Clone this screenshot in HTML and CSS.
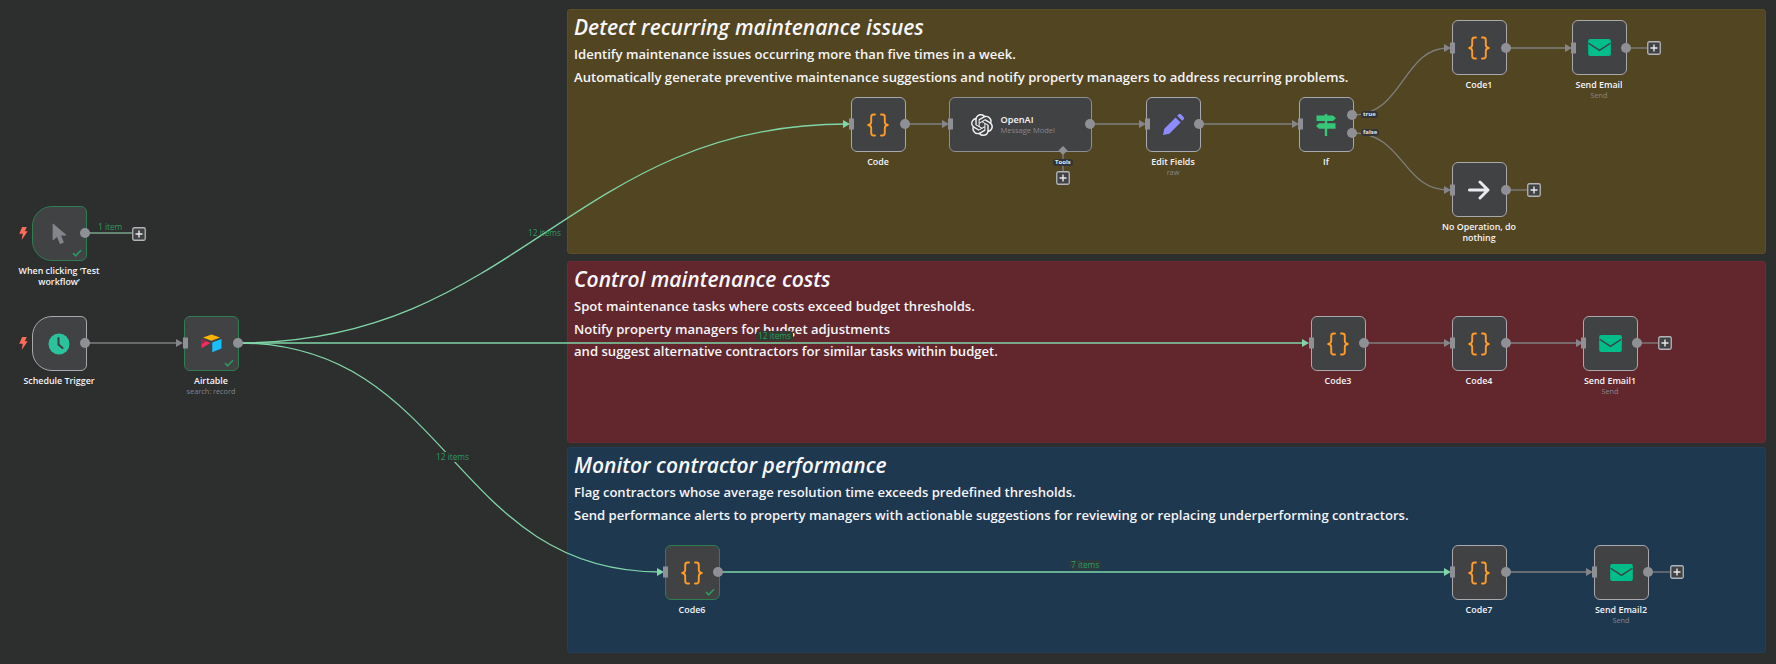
FILE: index.html
```html
<!DOCTYPE html>
<html lang="en">
<head>
<meta charset="utf-8">
<title>Workflow</title>
<link rel="stylesheet" href="styles.css">
</head>
<body>
<svg class="defs" width="0" height="0" aria-hidden="true">
  <defs>
    <symbol id="i-code" viewBox="0 0 24 24">
      <path d="M9 1.500H7.600C5.900 1.500 5.200 2.400 5.200 4v5c0 1.500-.8 2.600-3 3 2.200.4 3 1.500 3 3v5c0 1.600.7 2.500 2.400 2.500H9M15 1.500h1.400c1.700 0 2.400.9 2.400 2.500v5c0 1.500.8 2.600 3 3-2.200.4-3 1.500-3 3v5c0 1.600-.7 2.500-2.400 2.500H15" fill="none" stroke="#ff9b26" stroke-width="1.900" stroke-linecap="round" stroke-linejoin="round"/>
    </symbol>
    <symbol id="i-mail" viewBox="0 0 24 18">
      <rect width="24" height="18" rx="2" fill="#00bd8a"/>
      <path d="M0.500 4.500 12 12 23.500 4.500" fill="none" stroke="#3a4046" stroke-width="1.500"/>
    </symbol>
    <symbol id="i-plus" viewBox="0 0 14 14">
      <rect x=".75" y=".75" width="12.500" height="12.500" rx="1.500" fill="#414244" stroke="#b4b4ba" stroke-width="1.300"/>
      <path d="M7 3.500v7M3.500 7h7" stroke="#e8e8ee" stroke-width="1.400"/>
    </symbol>
    <symbol id="i-bolt" viewBox="0 0 9 14">
      <path d="M3 0h5L6 4.700h3L2.500 14l1.200-6.600H0z" fill="#ff6d5a"/>
    </symbol>
    <symbol id="i-check" viewBox="0 0 12 10">
      <path d="M1 5.200 4.300 8.500 11 1.500" fill="none" stroke="#2f9a63" stroke-width="2"/>
    </symbol>
  </defs>
</svg>

<main class="canvas">
  <section class="note note-yellow">
    <h2>Detect recurring maintenance issues</h2>
    <p>Identify maintenance issues occurring more than five times in a week.</p>
    <p>Automatically generate preventive maintenance suggestions and notify property managers to address recurring problems.</p>
  </section>
  <section class="note note-red">
    <h2>Control maintenance costs</h2>
    <p>Spot maintenance tasks where costs exceed budget thresholds.</p>
    <p>Notify property managers for budget adjustments</p>
    <p>and suggest alternative contractors for similar tasks within budget.</p>
  </section>
  <section class="note note-blue">
    <h2>Monitor contractor performance</h2>
    <p>Flag contractors whose average resolution time exceeds predefined thresholds.</p>
    <p>Send performance alerts to property managers with actionable suggestions for reviewing or replacing underperforming contractors.</p>
  </section>

  <div class="node pos-manual">
    <div class="box trigger ok">
      <svg class="icon-cursor" viewBox="0 0 16 24"><path d="M1 1v17.500l4.500-4 3.300 8 3.400-1.500-3.300-7.800H15z" fill="#85858c" stroke="#85858c" stroke-width="1" stroke-linejoin="round"/></svg>
      <svg class="check"><use href="#i-check"/></svg>
    </div>
    <span class="label">When clicking ‘Test workflow’</span>
    <svg class="bolt"><use href="#i-bolt"/></svg>
  </div>

  <div class="node pos-schedule">
    <div class="box trigger">
      <svg class="icon-clock" viewBox="0 0 22 22"><circle cx="11" cy="11" r="10.500" fill="#2cc29b"/><path d="M10.500 5v6.500l4 3.500" fill="none" stroke="#3c3d40" stroke-width="2" stroke-linecap="round" stroke-linejoin="round"/></svg>
    </div>
    <span class="label">Schedule Trigger</span>
    <svg class="bolt"><use href="#i-bolt"/></svg>
  </div>

  <div class="node pos-airtable">
    <div class="box ok">
      <svg class="icon-airtable" viewBox="0 0 22 20"><path d="M11 0.500 20 3.700 11 7.200 2 3.700z" fill="#fcb400"/><path d="M11.800 9 21.500 5.200v10L11.800 19.200z" fill="#18bfff"/><path d="M.500 5.500 9.800 9.500 .500 15z" fill="#f82b60"/><path d="M.500 5.500 5.200 7.500 .500 11z" fill="#8a2b48"/></svg>
      <svg class="check"><use href="#i-check"/></svg>
    </div>
    <span class="label">Airtable</span>
    <span class="sub">search: record</span>
  </div>

  <div class="node pos-code">
    <div class="box"><svg class="icon-code"><use href="#i-code"/></svg></div>
    <span class="label">Code</span>
  </div>

  <div class="node-wide pos-openai">
    <svg class="icon-openai" viewBox="0 0 24 24"><path fill="#f2f2f5" d="M22.2819 9.8211a5.9847 5.9847 0 0 0-.5157-4.9108 6.0462 6.0462 0 0 0-6.5098-2.9A6.0651 6.0651 0 0 0 4.9807 4.1818a5.9847 5.9847 0 0 0-3.9977 2.9 6.0462 6.0462 0 0 0 .7427 7.0966 5.98 5.98 0 0 0 .511 4.9107 6.051 6.051 0 0 0 6.5146 2.9001A5.9847 5.9847 0 0 0 13.2599 24a6.0557 6.0557 0 0 0 5.7718-4.2058 5.9894 5.9894 0 0 0 3.9977-2.9001 6.0557 6.0557 0 0 0-.7475-7.0729zm-9.022 12.6081a4.4755 4.4755 0 0 1-2.8764-1.0408l.1419-.0804 4.7783-2.7582a.7948.7948 0 0 0 .3927-.6813v-6.7369l2.02 1.1686a.071.071 0 0 1 .038.052v5.5826a4.504 4.504 0 0 1-4.4945 4.4944zm-9.6607-4.1254a4.4708 4.4708 0 0 1-.5346-3.0137l.142.0852 4.783 2.7582a.7712.7712 0 0 0 .7806 0l5.8428-3.3685v2.3324a.0804.0804 0 0 1-.0332.0615L9.74 19.9502a4.4992 4.4992 0 0 1-6.1408-1.6464zM2.3408 7.8956a4.485 4.485 0 0 1 2.3655-1.9728V11.6a.7664.7664 0 0 0 .3879.6765l5.8144 3.3543-2.0201 1.1685a.0757.0757 0 0 1-.071 0l-4.8303-2.7865A4.504 4.504 0 0 1 2.3408 7.872zm16.5963 3.8558L13.1038 8.364 15.1192 7.2a.0757.0757 0 0 1 .071 0l4.8303 2.7913a4.4944 4.4944 0 0 1-.6765 8.1042v-5.6772a.79.79 0 0 0-.407-.667zm2.0107-3.0231l-.142-.0852-4.7735-2.7818a.7759.7759 0 0 0-.7854 0L9.409 9.2297V6.8974a.0662.0662 0 0 1 .0284-.0615l4.8303-2.7866a4.4992 4.4992 0 0 1 6.6802 4.66zM8.3065 12.863l-2.02-1.1638a.0804.0804 0 0 1-.038-.0567V6.0742a4.4992 4.4992 0 0 1 7.3757-3.4537l-.142.0805L8.704 5.459a.7948.7948 0 0 0-.3927.6813zm1.0976-2.3654l2.602-1.4998 2.6069 1.4998v2.9994l-2.5974 1.4997-2.6067-1.4997Z"/></svg>
    <div class="wide-text">
      <span class="label">OpenAI</span>
      <span class="sub">Message Model</span>
    </div>
  </div>

  <div class="node pos-edit">
    <div class="box">
      <svg class="icon-pencil" viewBox="0 0 22 22"><path d="M1 21l1.200-6L13 4.200l4.800 4.800L7 19.800z M14.500 2.700 16 1.200a1.400 1.400 0 0 1 2 0l2.800 2.800a1.400 1.400 0 0 1 0 2L19.300 7.500z" fill="#8c8cff"/></svg>
    </div>
    <span class="label">Edit Fields</span>
    <span class="sub">raw</span>
  </div>

  <div class="node pos-if">
    <div class="box">
      <svg class="icon-sign" viewBox="0 0 22 22"><path d="M1.500 1.500H18l3 2.800-3 2.800H1.500z M4 9.200h16.500v5.600H4L1 12z M9.800 0h2.400v1.500H9.800z M9.800 7.100h2.400v2.100H9.800z M9.800 14.800h2.400V22H9.800z" fill="#35c777"/></svg>
    </div>
    <span class="label">If</span>
  </div>

  <div class="node pos-code1">
    <div class="box"><svg class="icon-code"><use href="#i-code"/></svg></div>
    <span class="label">Code1</span>
  </div>
  <div class="node pos-email">
    <div class="box"><svg class="icon-mail"><use href="#i-mail"/></svg></div>
    <span class="label">Send Email</span>
    <span class="sub">Send</span>
  </div>
  <div class="node pos-noop">
    <div class="box">
      <svg class="icon-arrow" viewBox="0 0 22 20"><path d="M1.500 10h18M12 2l8 8-8 8" fill="none" stroke="#e9e9ef" stroke-width="3" stroke-linecap="round" stroke-linejoin="round"/></svg>
    </div>
    <span class="label">No Operation, do nothing</span>
  </div>

  <div class="node pos-code3">
    <div class="box"><svg class="icon-code"><use href="#i-code"/></svg></div>
    <span class="label">Code3</span>
  </div>
  <div class="node pos-code4">
    <div class="box"><svg class="icon-code"><use href="#i-code"/></svg></div>
    <span class="label">Code4</span>
  </div>
  <div class="node pos-email1">
    <div class="box"><svg class="icon-mail"><use href="#i-mail"/></svg></div>
    <span class="label">Send Email1</span>
    <span class="sub">Send</span>
  </div>

  <div class="node pos-code6">
    <div class="box ok">
      <svg class="icon-code"><use href="#i-code"/></svg>
      <svg class="check"><use href="#i-check"/></svg>
    </div>
    <span class="label">Code6</span>
  </div>
  <div class="node pos-code7">
    <div class="box"><svg class="icon-code"><use href="#i-code"/></svg></div>
    <span class="label">Code7</span>
  </div>
  <div class="node pos-email2">
    <div class="box"><svg class="icon-mail"><use href="#i-mail"/></svg></div>
    <span class="label">Send Email2</span>
    <span class="sub">Send</span>
  </div>

  <svg class="edges" viewBox="0 0 1776 664" width="1776" height="664">
    <g class="edge-gray">
      <path d="M85 343H180"/>
      <path d="M905 124H945"/>
      <path d="M1091 124H1142"/>
      <path d="M1200 124H1295"/>
      <path d="M1353 115C1403 115 1403 48 1448 48"/>
      <path d="M1353 133C1403 133 1403 190 1448 190"/>
      <path d="M1506 48H1568"/>
      <path d="M1626 48H1647"/>
      <path d="M1506 190H1527"/>
      <path d="M1365 343H1448"/>
      <path d="M1506 343H1579"/>
      <path d="M1637 343H1658"/>
      <path d="M1506 572H1590"/>
      <path d="M1648 572H1670"/>
      <path d="M1063 151V172"/>
    </g>
    <path class="edge-done" d="M85 233H132"/>
    <g class="edge-green">
      <path d="M238 343C517 343 572 124 847 124"/>
      <path d="M238 343H1306"/>
      <path d="M238 343C451 343 451 572 661 572"/>
      <path d="M719 572H1448"/>
    </g>
    <g class="arrows-green">
      <path d="M843 120l7 4-7 4z"/>
      <path d="M1302 339l7 4-7 4z"/>
      <path d="M657 568l7 4-7 4z"/>
      <path d="M1444 568l7 4-7 4z"/>
    </g>
    <g class="arrows-gray">
      <path d="M176 339l7 4-7 4z"/>
      <path d="M942 120l7 4-7 4z"/>
      <path d="M1139 120l7 4-7 4z"/>
      <path d="M1292 120l7 4-7 4z"/>
      <path d="M1444 44l7 4-7 4z"/>
      <path d="M1565 44l7 4-7 4z"/>
      <path d="M1444 186l7 4-7 4z"/>
      <path d="M1444 339l7 4-7 4z"/>
      <path d="M1576 339l7 4-7 4z"/>
      <path d="M1586 568l7 4-7 4z"/>
    </g>
    <g class="inputs">
      <rect x="183" y="337.500" width="5" height="11"/>
      <rect x="849" y="118.500" width="5" height="11"/>
      <rect x="948" y="118.500" width="5" height="11"/>
      <rect x="1145" y="118.500" width="5" height="11"/>
      <rect x="1298" y="118.500" width="5" height="11"/>
      <rect x="1450" y="42.500" width="5" height="11"/>
      <rect x="1571" y="42.500" width="5" height="11"/>
      <rect x="1450" y="184.500" width="5" height="11"/>
      <rect x="1309" y="337.500" width="5" height="11"/>
      <rect x="1450" y="337.500" width="5" height="11"/>
      <rect x="1581" y="337.500" width="5" height="11"/>
      <rect x="663" y="566.500" width="5" height="11"/>
      <rect x="1450" y="566.500" width="5" height="11"/>
      <rect x="1592" y="566.500" width="5" height="11"/>
    </g>
    <g class="outputs">
      <circle cx="85" cy="233" r="5"/>
      <circle cx="85" cy="343" r="5"/>
      <circle cx="238" cy="343" r="5"/>
      <circle cx="905" cy="124" r="5"/>
      <circle cx="1090" cy="124" r="5"/>
      <circle cx="1199" cy="124" r="5"/>
      <circle cx="1352" cy="115" r="5"/>
      <circle cx="1352" cy="133" r="5"/>
      <circle cx="1506" cy="48" r="5"/>
      <circle cx="1626" cy="48" r="5"/>
      <circle cx="1506" cy="190" r="5"/>
      <circle cx="1364" cy="343" r="5"/>
      <circle cx="1506" cy="343" r="5"/>
      <circle cx="1637" cy="343" r="5"/>
      <circle cx="718" cy="572" r="5"/>
      <circle cx="1506" cy="572" r="5"/>
      <circle cx="1648" cy="572" r="5"/>
      <path d="M1063 146l4.500 4.500-4.500 4.500-4.500-4.500z" class="diamond"/>
    </g>
    <use href="#i-plus" x="132" y="227" width="14" height="14"/>
    <use href="#i-plus" x="1647" y="41" width="14" height="14"/>
    <use href="#i-plus" x="1527" y="183" width="14" height="14"/>
    <use href="#i-plus" x="1658" y="336" width="14" height="14"/>
    <use href="#i-plus" x="1670" y="565" width="14" height="14"/>
    <use href="#i-plus" x="1056" y="171" width="14" height="14"/>
  </svg>

  <span class="edge-label lab-1">1 item</span>
  <span class="edge-label lab-a">12 items</span>
  <span class="edge-label lab-b">12 items</span>
  <span class="edge-label lab-c">12 items</span>
  <span class="edge-label lab-d">7 items</span>
  <span class="pill pill-true">true</span>
  <span class="pill pill-false">false</span>
  <span class="pill pill-tools">Tools</span>
</main>
</body>
</html>
```

FILE: styles.css
```css
html, body {
  margin: 0;
  padding: 0;
  background: #2d2e2e;
}

.defs {
  position: absolute;
}

.canvas {
  position: relative;
  width: 1776px;
  height: 664px;
  overflow: hidden;
  background: #2d2e2e;
  font-family: "Open Sans", sans-serif;
  color: #f5f5f8;
}

/* Sticky notes */
.note {
  position: absolute;
  left: 567px;
  width: 1199px;
  box-sizing: border-box;
  padding: 3px 6px;
  border-radius: 3px;
  border: 1px solid transparent;
}

.note h2 {
  margin: 0 0 1.300px;
  font-size: 21px;
  line-height: 29px;
  font-weight: 600;
  font-style: italic;
  color: #f7f7fa;
}

.note p {
  margin: 0;
  font-size: 13.100px;
  line-height: 22.400px;
  font-weight: 600;
  color: #f5f5f8;
}

.note-yellow {
  top: 9px;
  height: 245px;
  background: #524522;
  border-color: #5a4d28;
}

.note-red {
  top: 261px;
  height: 182px;
  background: #61272d;
  border-color: #6a2c33;
}

.note-blue {
  top: 447px;
  height: 206px;
  background: #1e3850;
  border-color: #233e58;
}

/* Nodes */
.node {
  position: absolute;
  width: 110px;
  display: flex;
  flex-direction: column;
  align-items: center;
  text-align: center;
}

.box {
  position: relative;
  width: 55px;
  height: 55px;
  box-sizing: border-box;
  display: flex;
  align-items: center;
  justify-content: center;
  background: #414244;
  border: 1.500px solid #a8a8ae;
  border-radius: 6px;
  margin-bottom: 4px;
}

.box.trigger {
  border-radius: 20px 6px 6px 20px;
}

.box.ok {
  border-color: #2f7d52;
}

.label {
  max-width: 96px;
  font-size: 8.900px;
  line-height: 11px;
  font-weight: 600;
  color: #f5f5f8;
}

.sub {
  font-size: 7.300px;
  line-height: 11px;
  color: #85858c;
  font-weight: 400;
}

.check {
  position: absolute;
  right: 4px;
  bottom: 3px;
  width: 10px;
  height: 8px;
}

.bolt {
  position: absolute;
  left: 15px;
  top: 21px;
  width: 9px;
  height: 13px;
}

.node-wide {
  position: absolute;
  width: 143px;
  height: 55px;
  box-sizing: border-box;
  display: flex;
  align-items: center;
  gap: 8px;
  padding-left: 20.500px;
  background: #414244;
  border: 1.500px solid #8f8f94;
  border-radius: 6px;
}

.wide-text {
  display: flex;
  flex-direction: column;
}

.wide-text .label {
  font-size: 9.200px;
}

.wide-text .sub {
  font-size: 7.500px;
  color: #86868e;
}

/* Icons */
.icon-code { width: 24px; height: 24px; }
.icon-mail { width: 23px; height: 17px; }
.icon-cursor { width: 15px; height: 22px; }
.icon-clock { width: 22px; height: 22px; }
.icon-airtable { width: 23px; height: 19px; }
.icon-openai { width: 22px; height: 22px; }
.icon-pencil { width: 23px; height: 23px; }
.icon-sign { width: 22px; height: 22px; }
.icon-arrow { width: 22px; height: 20px; }

/* Positions: free canvas */
.pos-manual { left: 4px; top: 206px; }
.pos-schedule { left: 4px; top: 316px; }
.pos-airtable { left: 156px; top: 316px; }
.pos-code { left: 823px; top: 97px; }
.pos-openai { left: 949px; top: 97px; }
.pos-edit { left: 1118px; top: 97px; }
.pos-if { left: 1271px; top: 97px; }
.pos-code1 { left: 1424px; top: 20px; }
.pos-email { left: 1544px; top: 20px; }
.pos-noop { left: 1424px; top: 162px; }
.pos-code3 { left: 1283px; top: 316px; }
.pos-code4 { left: 1424px; top: 316px; }
.pos-email1 { left: 1555px; top: 316px; }
.pos-code6 { left: 637px; top: 545px; }
.pos-code7 { left: 1424px; top: 545px; }
.pos-email2 { left: 1566px; top: 545px; }

/* Edges */
.edges {
  position: absolute;
  left: 0;
  top: 0;
  pointer-events: none;
}

.edge-gray path {
  fill: none;
  stroke: #7f7f7f;
  stroke-width: 1.300;
}

.edge-green path {
  fill: none;
  stroke: #7fd6a8;
  stroke-width: 1.300;
}

.edge-done {
  fill: none;
  stroke: #79a48a;
  stroke-width: 1.500;
}

.arrows-green path { fill: #7fd6a8; }
.arrows-gray path { fill: #85858a; }
.inputs rect { fill: #8f8f96; }
.outputs circle, .outputs path { fill: #8f8f96; }

.edge-label {
  position: absolute;
  padding: 0 2px;
  border-radius: 3px;
  font-size: 8.300px;
  line-height: 10px;
  color: #2f9a5f;
  white-space: nowrap;
}

.lab-1 { left: 96px; top: 222px; }
.lab-a { left: 526px; top: 228px; }
.lab-b { left: 756px; top: 331px; background: #303a30; }
.lab-c { left: 434px; top: 452px; background: #2d2e2e; }
.lab-d { left: 1069px; top: 560px; background: #2c3a40; }

.pill {
  position: absolute;
  padding: 0 2px;
  font-size: 6px;
  line-height: 7px;
  font-weight: 700;
  color: #dde6f0;
  background: #333436;
  border-radius: 3px;
}

.pill-true { left: 1361px; top: 111px; }
.pill-false { left: 1361px; top: 129px; }
.pill-tools { left: 1053px; top: 159px; }
```
